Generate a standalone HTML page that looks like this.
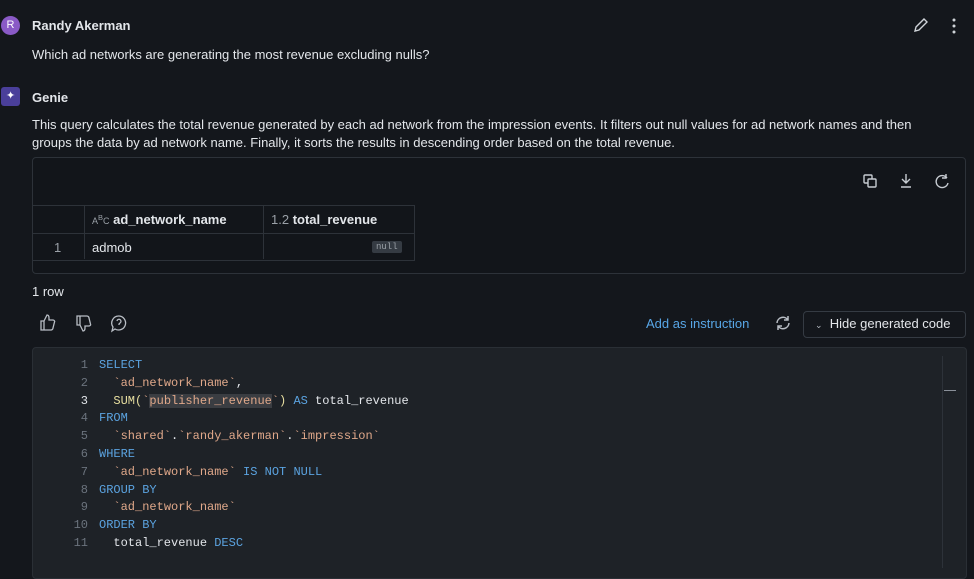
<!DOCTYPE html>
<html><head><style>
body{margin:0;width:974px;height:568px;overflow:hidden;background:#14171c;font-family:"Liberation Sans",sans-serif;color:#e3e6ea;position:relative}
.a{position:absolute}
.t{font-size:13px}
.b{font-weight:bold}
.code{font-family:"Liberation Mono",monospace;font-size:12px;line-height:17.8px;white-space:pre}
.k{color:#5ba3e0}.s{color:#e0a88a}.f{color:#e8dfa0}.n{color:#6b737d}
</style></head><body>
<div class="a" style="left:1px;top:16px;width:19px;height:19px;border-radius:50%;background:#8a5ac6;color:#fff;font-size:11px;text-align:center;line-height:19px">R</div>
<div class="a t b" style="left:32px;top:18px">Randy Akerman</div>
<div class="a t" style="left:32px;top:47px">Which ad networks are generating the most revenue excluding nulls?</div>
<svg class="a" style="left:909px;top:16px" width="50" height="20"><path d="M6 15l1-4 8-8 3 3-8 8z" fill="none" stroke="#cfd3d8" stroke-width="1.4"/><circle cx="45" cy="4" r="1.5" fill="#cfd3d8"/><circle cx="45" cy="10" r="1.5" fill="#cfd3d8"/><circle cx="45" cy="16" r="1.5" fill="#cfd3d8"/></svg>
<div class="a" style="left:1px;top:87px;width:19px;height:19px;border-radius:3px;background:#4a3f9a"></div>
<div class="a" style="left:6px;top:89px;color:#fff;font-size:11px">✦</div>
<div class="a t b" style="left:32px;top:90px">Genie</div>
<div class="a t" style="left:32px;top:116px;line-height:18px;width:920px">This query calculates the total revenue generated by each ad network from the impression events. It filters out null values for ad network names and then groups the data by ad network name. Finally, it sorts the results in descending order based on the total revenue.</div>
<div class="a" style="left:32px;top:157px;width:932px;height:115px;border:1px solid #2d3239;border-radius:4px;background:#12151a"></div>
<svg class="a" style="left:860px;top:172px" width="95" height="20" fill="none" stroke="#c7ccd2" stroke-width="1.4"><rect x="4" y="3" width="8" height="8" rx="1"/><rect x="8" y="7" width="8" height="8" rx="1" fill="#12151a"/><path d="M46 2v9M42 7l4 4 4-4M41 15h10"/><path d="M87 6a6 6 0 1 0 1 5M86 2v4h-4"/></svg>
<div class="a" style="left:33px;top:205px;width:381px;height:54px;border-top:1px solid #2d3239;border-bottom:1px solid #2d3239;border-right:1px solid #2d3239"></div>
<div class="a" style="left:33px;top:233px;width:381px;border-top:1px solid #2d3239"></div>
<div class="a" style="left:84px;top:205px;height:54px;border-left:1px solid #2d3239"></div>
<div class="a" style="left:263px;top:205px;height:54px;border-left:1px solid #2d3239"></div>
<div class="a t" style="left:92px;top:212px"><span style="font-size:9px;color:#9aa0a7">A<sup>B</sup>C</span> <b>ad_network_name</b></div>
<div class="a t" style="left:271px;top:212px"><span style="color:#9aa0a7">1.2</span> <b>total_revenue</b></div>
<div class="a t" style="left:54px;top:240px;color:#9aa0a7">1</div>
<div class="a t" style="left:92px;top:240px">admob</div>
<div class="a" style="left:372px;top:241px;background:#353b43;color:#9aa0a7;font-family:'Liberation Mono',monospace;font-size:9px;padding:1px 4px;border-radius:2px">null</div>
<div class="a t" style="left:32px;top:284px">1 row</div>
<svg class="a" style="left:38px;top:313px" width="95" height="20" fill="none" stroke="#b8bdc4" stroke-width="1.3"><path d="M3 8h3v9H3zM6 8l3-6c2 0 2 2 2 3v2h4c1 0 2 1 1.5 2l-1.5 6c0 1-1 2-2 2H6"/><path d="M39 12h3V3h-3zM42 12l3 6c2 0 2-2 2-3v-2h4c1 0 2-1 1.5-2l-1.5-6c0-1-1-2-2-2h-7"/><path d="M81 3a7 7 0 1 1-4 13l-3 2 1-4a7 7 0 0 1 6-11zM79 8a2 2 0 1 1 3 2l-1 1v1"/></svg>
<div class="a t" style="left:646px;top:316px;color:#58a6e6">Add as instruction</div>
<svg class="a" style="left:774px;top:314px" width="18" height="18" fill="none" stroke="#b8bdc4" stroke-width="1.5"><path d="M3 9a6 6 0 0 1 11-3M15 9a6 6 0 0 1-11 3M14 2v4h-4M4 16v-4h4"/></svg>
<div class="a" style="left:803px;top:311px;width:161px;height:25px;border:1px solid #353b43;border-radius:4px"></div>
<div class="a t" style="left:815px;top:316px"><span style="font-size:9px;color:#b8bdc4">⌄</span>&nbsp; Hide generated code</div>
<div class="a" style="left:32px;top:347px;width:933px;height:230px;background:#1e2227;border:1px solid #2a2f35;border-radius:4px"></div>
<div class="a" style="left:942px;top:356px;width:15px;height:212px;border-left:1px solid #2d3239"></div>
<div class="a" style="left:944px;top:390px;width:12px;border-top:1px solid #8a9099"></div>
<div class="a code n" style="left:60px;top:357px;width:28px;text-align:right">1
2
<span style="color:#e3e6ea">3</span>
4
5
6
7
8
9
10
11</div>
<div class="a code" style="left:99px;top:357px"><span class="k">SELECT</span>
  <span class="s">`ad_network_name`</span>,
  <span class="f">SUM(</span><span class="s">`<span style="background:#3a3d42">publisher_revenue</span>`</span><span class="f">)</span> <span class="k">AS</span> total_revenue
<span class="k">FROM</span>
  <span class="s">`shared`</span>.<span class="s">`randy_akerman`</span>.<span class="s">`impression`</span>
<span class="k">WHERE</span>
  <span class="s">`ad_network_name`</span> <span class="k">IS NOT NULL</span>
<span class="k">GROUP BY</span>
  <span class="s">`ad_network_name`</span>
<span class="k">ORDER BY</span>
  total_revenue <span class="k">DESC</span></div>
</body></html>
